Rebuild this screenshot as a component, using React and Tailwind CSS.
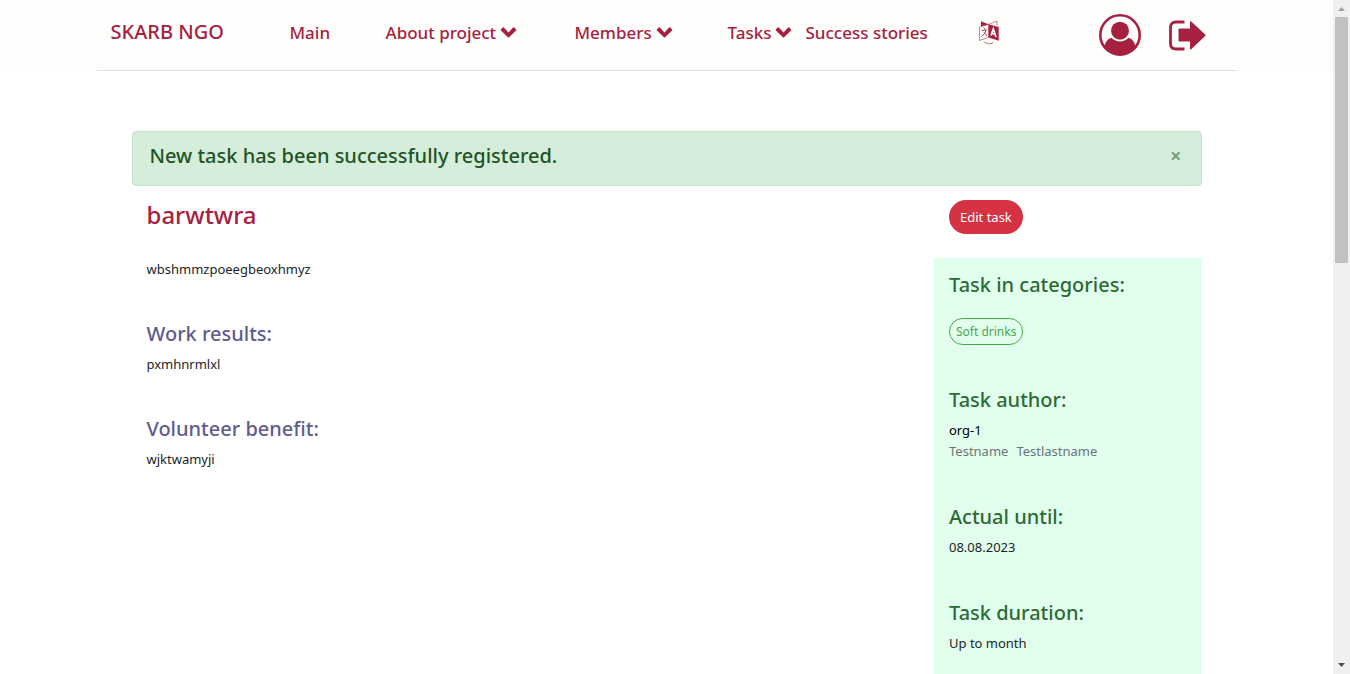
import React from "react";

function ChevronIcon() {
  return (
    <svg viewBox="0 0 17 12" className="h-3 w-[17px]" aria-hidden="true">
      <path
        d="M.9 3.500L2.700 1.600Q3.300 1.100 3.900 1.600L8.500 6.500L13.100 1.600Q13.700 1.100 14.300 1.600L16.100 3.500Q16.600 4.100 16.100 4.600L9.100 11.300Q8.500 11.700 7.900 11.300L.9 4.600Q.4 4.100 .9 3.500Z"
        fill="currentColor"
      />
    </svg>
  );
}

function UserIcon() {
  return (
    <svg viewBox="0 0 42 42" className="size-[42px]" aria-hidden="true">
      <circle cx="21" cy="21" r="19.7" fill="none" stroke="currentColor" strokeWidth="2.600" />
      <circle cx="21" cy="16.700" r="9" fill="currentColor" />
      <path
        d="M5.500 32.500C6.200 28 9 24.200 12.600 23.900C15 26.200 17.800 27.400 21 27.400S27 26.200 29.400 23.900C33 24.200 35.800 28 36.500 32.500C33 37.600 27.500 41 21 41S9 37.600 5.500 32.500Z"
        fill="currentColor"
      />
    </svg>
  );
}

function LogoutIcon() {
  return (
    <svg viewBox="0 0 37 31" className="h-[31px] w-[37px]" aria-hidden="true">
      <path d="M15.500 2H7Q1.500 2 1.500 7.500V23.500Q1.500 29 7 29H15.500" fill="none" stroke="currentColor" strokeWidth="2.800" />
      <path d="M9.500 9.500Q9.500 8.500 10.500 8.500H21V2Q21 .7 22.200 1.500L36.200 14.500Q37 15.300 36.200 16.100L22.200 29.200Q21 30 21 28.700V21.500H10.500Q9.500 21.500 9.500 20.500Z" fill="currentColor" />
    </svg>
  );
}

function LanguageIcon() {
  return (
    <svg viewBox="0 0 22 25" className="h-[25px] w-[22px]" aria-hidden="true">
      <path d="M3 1.200L10.600 4.300L3 6.500Z" fill="currentColor" />
      <path d="M10.600 4.300L19 1V5.500M10.600 4.300L1.500 7V20.500L10.600 17.500Z" fill="none" stroke="currentColor" strokeOpacity=".7" strokeWidth=".8" />
      <path d="M10.600 4.300L20.700 7V20.700L10.600 17.500Z" fill="currentColor" />
      <path d="M5.500 7.500L7 9M3.800 10.700L8.300 9.700Q7.500 13.500 3.600 16.500M6 12.500L9 16" fill="none" stroke="currentColor" strokeWidth=".9" />
      <path d="M13 15.600L15.300 8.800L18 16.900M13.900 13.400L17 14.300" fill="none" stroke="#fff" strokeWidth="1.600" />
      <path d="M5.500 21.500Q10.500 25.500 15.500 22.500" fill="none" stroke="currentColor" strokeOpacity=".8" strokeWidth=".8" />
    </svg>
  );
}

function NavMenu({ label }) {
  return (
    <button type="button" className="flex items-center gap-1">
      {label}
      <ChevronIcon />
    </button>
  );
}

function Header() {
  return (
    <header className="bg-[#fefefc]">
      <div className="mx-auto flex h-[71px] max-w-[1140px] items-start justify-between border-b border-[#dee2e6] px-3.5 text-[#a6213f]">
        <nav className="flex h-16 items-center text-[17px] font-medium">
          <a href="#home" className="w-[179px] text-xl">SKARB NGO</a>
          <a href="#main" className="w-24">Main</a>
          <div className="w-[189px]"><NavMenu label="About project" /></div>
          <div className="w-[153px]"><NavMenu label="Members" /></div>
          <div className="w-[78px]"><NavMenu label="Tasks" /></div>
          <a href="#stories" className="w-[172px]">Success stories</a>
          <button type="button" aria-label="Language"><LanguageIcon /></button>
        </nav>
        <div className="flex h-[70px] items-center gap-7 pr-[17px]">
          <a href="#profile" aria-label="Profile"><UserIcon /></a>
          <a href="#logout" aria-label="Log out"><LogoutIcon /></a>
        </div>
      </div>
    </header>
  );
}

function Section({ title, children }) {
  return (
    <section>
      <h2 className="mb-2 text-xl leading-6 font-medium">{title}</h2>
      <div className="text-[#212529]">{children}</div>
    </section>
  );
}

function Scrollbar() {
  return (
    <div className="flex w-[17px] shrink-0 flex-col items-center bg-[#f0f0f0]" aria-hidden="true">
      <svg viewBox="0 0 17 17" className="size-[17px]"><path d="M5 11L8.500 7L12 11Z" fill="#a3a3a3" /></svg>
      <div className="h-[246px] w-[13px] bg-[#c1c1c1]" />
      <svg viewBox="0 0 17 17" className="mt-auto size-[17px]"><path d="M5 6L8.500 10L12 6Z" fill="#505050" /></svg>
    </div>
  );
}

export default function App() {
  return (
    <div className="flex h-screen overflow-hidden bg-white font-['Noto_Sans','Open_Sans',sans-serif] text-[13px] leading-[21px]">
      <div className="min-w-0 flex-1 overflow-hidden">
        <Header />
        <main className="mx-auto max-w-[1070px] pt-[60px]">
          <div role="alert" className="flex items-start justify-between rounded border border-[#c3e6cb] bg-[#d5edda] px-[17px] pt-3 pb-[17px] text-[#1f5525]">
            <p className="text-xl leading-6 font-medium">New task has been successfully registered.</p>
            <button type="button" aria-label="Close" className="pr-0.5 text-xl leading-6 font-bold opacity-50">×</button>
          </div>
          <div className="flex">
            <div className="w-3/4 px-[15px] pt-3.5">
              <h1 className="text-2xl leading-[30px] font-medium text-[#a6213f]">barwtwra</h1>
              <p className="mt-[29px] text-[#212529]">wbshmmzpoeegbeoxhmyz</p>
              <div className="mt-[42px] flex flex-col gap-[42px] text-[#5f5b8f]">
                <Section title="Work results:">pxmhnrmlxl</Section>
                <Section title="Volunteer benefit:">wjktwamyji</Section>
              </div>
            </div>
            <aside className="w-1/4">
              <div className="px-[15px] pt-3.5 pb-6">
                <button type="button" className="block rounded-full bg-[#d53343] px-[11px] py-1.5 leading-[22px] text-white">Edit task</button>
              </div>
              <div className="flex flex-col gap-[43px] bg-[#e2ffee] px-[15px] pt-[15px] pb-16 text-[#2d6b35]">
                <Section title="Task in categories:">
                  <div className="flex pt-[13px]">
                    <a href="#soft-drinks" className="rounded-full border border-[#43a843] px-1.5 py-0.5 text-xs leading-[21px] text-[#4da64d]">Soft drinks</a>
                  </div>
                </Section>
                <Section title="Task author:">
                  <a href="#org-1" className="block text-black">org-1</a>
                  <p className="flex gap-2 text-[#6c757d]"><span>Testname</span><span>Testlastname</span></p>
                </Section>
                <Section title="Actual until:">08.08.2023</Section>
                <Section title="Task duration:">Up to month</Section>
              </div>
            </aside>
          </div>
        </main>
      </div>
      <Scrollbar />
    </div>
  );
}
